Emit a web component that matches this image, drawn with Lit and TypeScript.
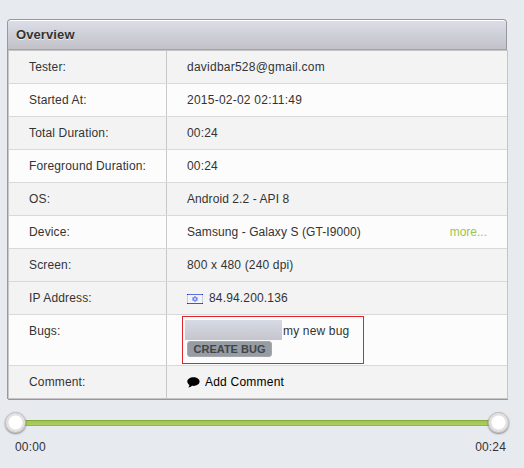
import { LitElement, html, css, nothing } from "lit";
import { customElement, property } from "lit/decorators.js";

type Row = { label: string; value: unknown; shade: boolean; fit?: string; more?: boolean; tall?: boolean };

const flag = html`<svg class="flag" width="16" height="10" viewBox="0 0 16 10" shape-rendering="crispEdges">
  <rect width="16" height="10" fill="#c9cdda"></rect>
  <rect x="1" y="1" width="14" height="8" fill="#f2f3fb"></rect>
  <rect width="16" height="1" fill="#5a70dc"></rect>
  <rect y="9" width="16" height="1" fill="#3f57d8"></rect>
  <rect width="1" height="1" fill="#1b2ec4"></rect><rect x="15" width="1" height="1" fill="#1b2ec4"></rect>
  <rect y="9" width="1" height="1" fill="#1b2ec4"></rect><rect x="15" y="9" width="1" height="1" fill="#1b2ec4"></rect>
  <g fill="none" stroke="#6d86ee" stroke-width="1" shape-rendering="auto">
    <path d="M8 2.200 10.500 6.200H5.500Z"></path><path d="M8 7.800 10.500 3.800H5.500Z"></path>
  </g>
</svg>`;

const bubble = html`<svg class="bubble" width="13" height="11" viewBox="0 0 13 11">
  <path d="M6.5 0.3C10 0.3 12.6 2.2 12.6 4.6S10 8.900 6.5 8.900C6 8.900 5.500 8.900 5 8.800 3.900 9.800 2.500 10.300 1.200 10.400 1.900 9.700 2.400 8.900 2.400 7.900 1.100 7.100 0.300 5.900 0.300 4.600 0.300 2.200 3 0.300 6.500 0.300Z"></path>
</svg>`;

@customElement("time-slider")
export class TimeSlider extends LitElement {
  @property() start = "";
  @property() end = "";
  static styles = css`
    :host { display: block; width: 504px; margin: 12px 0 0 -2px; }
    .rail { display: flex; align-items: center; justify-content: space-between; height: 23px; position: relative; }
    .bar {
      position: absolute; left: 10px; right: 10px; top: 9px; height: 6px; box-sizing: border-box;
      border: 1px solid #8fae3c; border-top-color: #86a83a; border-bottom-color: #98b64c;
      background: linear-gradient(#a0c64c, #accb66);
    }
    .knob {
      position: relative; box-sizing: border-box; width: 21px; height: 21px; border-radius: 50%;
      border: 1px solid #bdb9b9; background: radial-gradient(circle, #fff 0 6.5px, #e2dddd 7.5px, #ebe8e8 10px);
      box-shadow: 0 1px 2px rgba(0, 0, 0, 0.45);
    }
    .times { display: flex; justify-content: space-between; padding: 5px 3px 0 10px; line-height: 16px; letter-spacing: 0.15px; }
  `;
  render() {
    return html`<div class="rail"><div class="bar"></div><div class="knob"></div><div class="knob"></div></div>
      <div class="times"><span>${this.start}</span><span>${this.end}</span></div>`;
  }
}

@customElement("app-root")
export class AppRoot extends LitElement {
  static styles = css`
    :host {
      display: block; box-sizing: border-box; width: 524px; height: 468px; padding: 19px 0 0 7px;
      background: #e7ebf0; color: #333; overflow: hidden;
      font: 12px "Liberation Sans", Arial, sans-serif;
    }
    .panel { width: 501px; }
    .head {
      box-sizing: border-box; width: 500px; height: 31px; padding-left: 8px; line-height: 30px;
      border: 1px solid #98989c; border-bottom-color: #a6a5ad; border-radius: 4px 4px 0 0;
      background: linear-gradient(#dbdfe8, #c2c1c8); box-shadow: inset 0 1px #fff;
      font-size: 13px; font-weight: bold; text-shadow: 0 1px #eee; letter-spacing: 0.1px;
    }
    .body { border: 1px solid #c4c4c6; border-left-color: #c8c8c8; box-shadow: -1px 0 #999, 0 1px #999; margin-left: 1px; }
    .row { display: grid; grid-template-columns: 158px 1fr; height: 32px; border-bottom: 1px solid #d9d9d9; background: #fcfcfc; line-height: 32px; }
    .row:last-child { border-bottom: 0; }
    .shade { background: #f3f3f3; }
    .tall { height: 50px; }
    .label { padding-left: 20px; border-right: 1px solid #c8c8c8; white-space: nowrap; letter-spacing: 0.15px; }
    .value { display: flex; align-items: center; padding: 0 20px; white-space: nowrap; letter-spacing: 0.16px; }
    .wide { letter-spacing: 0.24px; }
    .tight { letter-spacing: 0.08px; }
    .more { margin-left: auto; color: #9fc54d; letter-spacing: 0; }
    .flag { margin: 1px 6px 0 0; }
    .bubble { margin-right: 5px; }
    .comment { color: #000; display: flex; align-items: center; letter-spacing: 0.22px; }
    .tall .value { padding: 0 0 0 15px; align-items: flex-start; }
    .mark { box-sizing: border-box; width: 182px; height: 48px; margin-top: 1px; padding: 3px 0 0 2px; border: 1px solid #e0262c; }
    .line { display: flex; height: 20px; line-height: 22px; }
    .blank { width: 97px; height: 20px; margin-right: 1px; background: linear-gradient(#d6dae4, #c5c5cd); }
    .create {
      display: block; box-sizing: border-box; width: 85px; height: 16px; margin: 1px 0 0 2px; padding: 0;
      border: 1px solid #a5a9ae; border-radius: 3px; background: #959ca4; color: #444;
      font: bold 11px/14px "Liberation Sans", Arial, sans-serif; text-align: center;
    }
  `;

  private rows: Row[] = [
    { label: "Tester:", value: "davidbar528@gmail.com", shade: true, fit: "wide" },
    { label: "Started At:", value: "2015-02-02 02:11:49", shade: false, fit: "wide" },
    { label: "Total Duration:", value: "00:24", shade: true },
    { label: "Foreground Duration:", value: "00:24", shade: false },
    { label: "OS:", value: "Android 2.2 - API 8", shade: true, fit: "tight" },
    { label: "Device:", value: "Samsung - Galaxy S (GT-I9000)", shade: false, fit: "tight", more: true },
    { label: "Screen:", value: "800 x 480 (240 dpi)", shade: true },
    { label: "IP Address:", value: html`${flag}<span>84.94.200.136</span>`, shade: true },
    {
      label: "Bugs:", shade: false, tall: true,
      value: html`<div class="mark"><div class="line"><span class="blank"></span><span>my new bug</span></div>
        <button class="create">CREATE BUG</button></div>`,
    },
    { label: "Comment:", value: html`<span class="comment">${bubble}Add Comment</span>`, shade: true },
  ];

  render() {
    return html`<div class="panel">
        <div class="head">Overview</div>
        <div class="body">
          ${this.rows.map((r) => html`<div class="row ${r.shade ? "shade" : ""} ${r.tall ? "tall" : ""}">
            <div class="label">${r.label}</div>
            <div class="value">${typeof r.value === "string" ? html`<span class=${r.fit ?? ""}>${r.value}</span>` : r.value}${r.more ? html`<span class="more">more...</span>` : nothing}</div>
          </div>`)}
        </div>
      </div>
      <time-slider start="00:00" end="00:24"></time-slider>`;
  }
}
